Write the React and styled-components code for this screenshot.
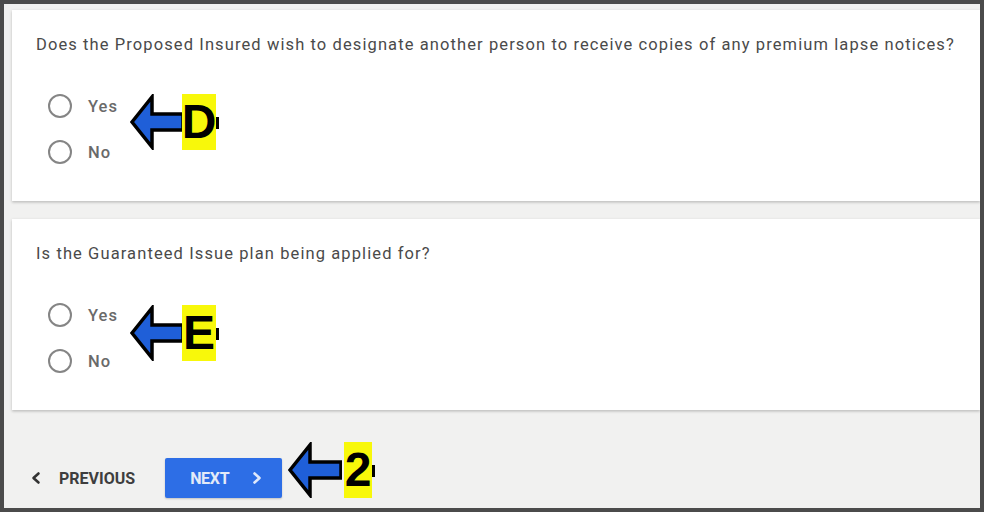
import React from "react";
import styled, { createGlobalStyle } from "styled-components";

const GlobalStyle = createGlobalStyle`
  html, body {
    margin: 0;
    padding: 0;
    background: #4b4b4b;
  }
  body {
    font-family: Roboto, "Noto Sans", Arial, sans-serif;
  }
`;

const Frame = styled.div`
  position: relative;
  width: 984px;
  height: 512px;
  box-sizing: border-box;
  border: 4px solid #4b4b4b;
  background: #f1f1f0;
  overflow: hidden;
`;

const Page = styled.div`
  display: flex;
  flex-direction: column;
  gap: 18px;
  padding: 6px 0 0 8px;
`;

const Card = styled.section`
  background: #fff;
  height: 191px;
  box-sizing: border-box;
  padding: 25px 0 0 24px;
  box-shadow: 0 1px 3px rgba(0, 0, 0, 0.18), 0 2px 2px rgba(0, 0, 0, 0.06);
`;

const Question = styled.p`
  margin: 0;
  font-size: 16.5px;
  line-height: 20px;
  letter-spacing: 1.1px;
  color: #4a4a4a;
`;

const Options = styled.div`
  display: flex;
  flex-direction: column;
  gap: 22px;
  margin-top: 39px;
  padding-left: 12px;
`;

const Option = styled.label`
  display: flex;
  align-items: center;
  gap: 16px;
  height: 24px;
  font-size: 16.5px;
  font-weight: 500;
  color: #6a6a6a;
  letter-spacing: 1px;
`;

const Radio = styled.span`
  width: 20px;
  height: 20px;
  border: 2px solid #858585;
  border-radius: 50%;
  flex: none;
`;

const Footer = styled.div`
  display: flex;
  align-items: center;
  padding: 48px 0 0 25px;
`;

const PrevButton = styled.button`
  display: flex;
  align-items: center;
  gap: 16px;
  border: none;
  background: none;
  padding: 0;
  font-family: Roboto, Arial, sans-serif;
  font-size: 16px;
  font-weight: 700;
  color: #3e3e3e;
  letter-spacing: 0;
  text-transform: uppercase;
`;

const NextButton = styled.button`
  display: flex;
  align-items: center;
  justify-content: space-between;
  margin-left: 30px;
  width: 117px;
  height: 40px;
  padding: 0 18px 0 25px;
  box-sizing: border-box;
  border: none;
  border-radius: 2px;
  background: #2d6ee6;
  color: #e3eaf8;
  font-family: Roboto, Arial, sans-serif;
  font-size: 16px;
  font-weight: 700;
  letter-spacing: -0.3px;
  text-transform: uppercase;
  box-shadow: 0 1px 2px rgba(0, 0, 0, 0.2);
`;

const Callout = styled.div`
  position: absolute;
  left: ${(p) => p.x}px;
  top: ${(p) => p.y}px;
  display: flex;
  align-items: center;
  pointer-events: none;
`;

const Tag = styled.span`
  display: inline-flex;
  align-items: center;
  justify-content: center;
  width: ${(p) => p.w}px;
  height: 56px;
  margin-left: ${(p) => p.gap}px;
  background: #f8f80a;
  color: #000;
  font-family: "Liberation Sans", Arial, sans-serif;
  font-weight: 700;
  font-size: 48px;
  line-height: 1;
  position: relative;
  &::after {
    content: "";
    position: absolute;
    right: -3px;
    top: 23px;
    width: 3px;
    height: 12px;
    background: #000;
  }
`;

const Chevron = ({ dir = "left", color = "currentColor", size = 14 }) => (
  <svg width={size} height={size} viewBox="0 0 14 14" fill="none">
    <path
      d={dir === "left" ? "M9.5 2.5 L4.5 7 L9.5 11.5" : "M4.5 2.5 L9.5 7 L4.5 11.5"}
      stroke={color}
      strokeWidth="2.6"
      strokeLinecap="round"
      strokeLinejoin="round"
    />
  </svg>
);

const Arrow = () => (
  <svg width="54" height="56" viewBox="0 0 54 56">
    <path
      d="M2 28 L22 3 L22 20 L53 20 L53 36 L22 36 L22 53 Z"
      fill="#1f5fd8"
      stroke="#000"
      strokeWidth="3.5"
      strokeLinejoin="miter"
    />
  </svg>
);

const questions = [
  "Does the Proposed Insured wish to designate another person to receive copies of any premium lapse notices?",
  "Is the Guaranteed Issue plan being applied for?",
];

const callouts = [
  { x: 130, y: 94, label: "D", w: 34, gap: -2 },
  { x: 130, y: 305, label: "E", w: 34, gap: -2 },
  { x: 288, y: 442, label: "2", w: 28, gap: 2 },
];

export default function App() {
  return (
    <>
      <GlobalStyle />
      <Frame>
        <Page>
          {questions.map((q) => (
            <Card key={q}>
              <Question>{q}</Question>
              <Options>
                <Option>
                  <Radio />
                  Yes
                </Option>
                <Option>
                  <Radio />
                  No
                </Option>
              </Options>
            </Card>
          ))}
        </Page>
        <Footer>
          <PrevButton>
            <Chevron dir="left" color="#333" size={14} />
            Previous
          </PrevButton>
          <NextButton>
            Next
            <Chevron dir="right" color="#dfe8fb" size={14} />
          </NextButton>
        </Footer>
        {callouts.map((c) => (
          <Callout key={c.label} x={c.x - 4} y={c.y - 4}>
            <Arrow />
            <Tag w={c.w} gap={c.gap}>{c.label}</Tag>
          </Callout>
        ))}
      </Frame>
    </>
  );
}
